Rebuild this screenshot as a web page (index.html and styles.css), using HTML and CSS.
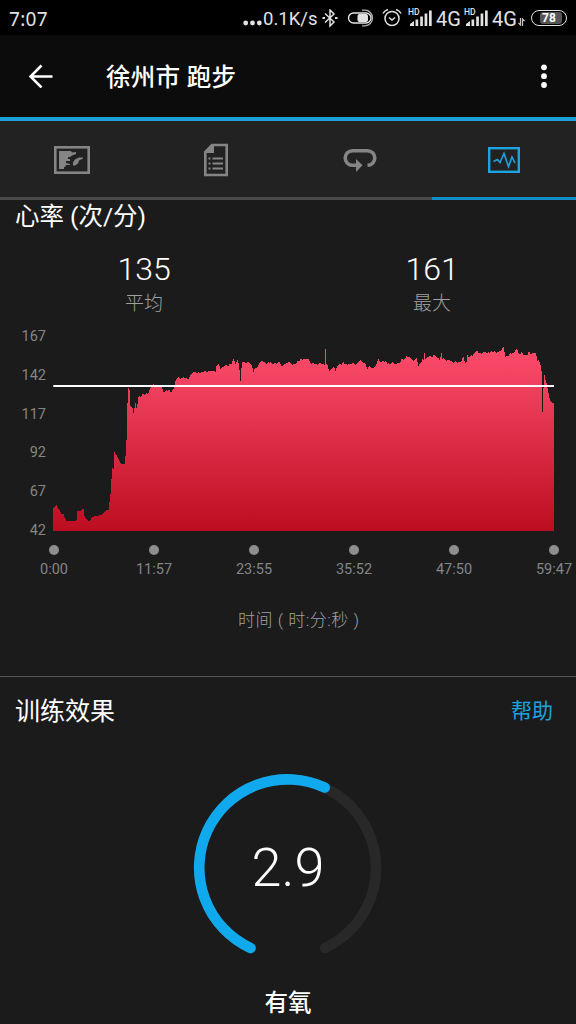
FILE: index.html
```html
<!DOCTYPE html>
<html lang="zh-CN">
<head>
<meta charset="utf-8">
<title>徐州市 跑步</title>
<link rel="stylesheet" href="styles.css">
</head>
<body>
<div class="screen">
  <div class="status">
    <span class="clock">7:07</span>
    <svg class="dots" width="19" height="18" viewBox="0 0 19 18" fill="#e2e2e2"><circle cx="2.7" cy="13" r="2.4"/><circle cx="9.5" cy="13" r="2.4"/><circle cx="16.3" cy="13" r="2.4"/></svg>
    <span class="speed">0.1K/s</span>
    <svg class="bt" width="16" height="20" viewBox="0 0 16 20" fill="none" stroke="#e2e2e2" stroke-width="1.5"><path d="M3 4.500 12 13 8 17V1l4 4-9 8.500"/><path d="M0.500 9h2.500M13 9h2.500" stroke-width="2.200"/></svg>
    <svg class="toggle" width="27" height="20" viewBox="0 0 27 20"><g transform="translate(0 -1)"><path d="M10 15H6.500a5 5 0 0 1 0-10H19a5 5 0 0 1 0 10H10" fill="none" stroke="#e2e2e2" stroke-width="1.400"/><rect x="10.500" y="6" width="10.500" height="8" rx="2" fill="#e2e2e2"/><path d="M15 2.200h3a7.500 7.800 0 0 1 0 15.600h-3" fill="none" stroke="#b5b5b5" stroke-width="1.300"/></g></svg>
    <svg class="alarm" width="20" height="20" viewBox="0 0 20 20" fill="none" stroke="#e2e2e2" stroke-width="1.500"><g transform="translate(0 -1)"><circle cx="10" cy="10.500" r="7"/><path d="M7 9.500l3 2.500 3-2.500M1 5.500Q2.500 2.500 6 1.500M19 5.500Q17.500 2.500 14 1.500"/></g></svg>
    <span class="signal"><small>HD</small><svg width="23" height="17" viewBox="0 0 23 17" fill="#e2e2e2"><path d="M1 16v-2l4-3v5zM6.500 9.500h2.700v6.500h-2.700zM11.200 6.500h2.700v9.500h-2.700zM15.600 3.500h2.700v12.500h-2.700zM20 0.500h2.700V16H20z"/></svg></span>
    <span class="net">4G</span>
    <span class="signal"><small>HD</small><svg width="23" height="17" viewBox="0 0 23 17" fill="#e2e2e2"><path d="M1 16v-2l4-3v5zM6.500 9.500h2.700v6.500h-2.700zM11.200 6.500h2.700v9.500h-2.700zM15.600 3.500h2.700v12.500h-2.700zM20 0.500h2.700V16H20z"/></svg></span>
    <span class="net">4G</span>
    <svg class="data" width="7" height="8" viewBox="0 0 7 8" fill="none" stroke="#c8c8c8" stroke-width="1.200"><path d="M2.500 0v7L0.500 5M4.500 8V1l2 2"/></svg>
    <span class="battery"><span class="level">78</span></span>
  </div>

  <header class="toolbar">
    <svg width="24" height="24" viewBox="0 0 24 24" fill="none" stroke="#fff" stroke-width="2.600"><path d="M23.500 12.500H1.500M12.500 1.500 1.500 12.500l11 11"/></svg>
    <h1>徐州市 跑步</h1>
    <svg class="more" width="6" height="24" viewBox="0 0 6 24" fill="#fff"><circle cx="3" cy="3.300" r="2.900"/><circle cx="3" cy="12.200" r="2.900"/><circle cx="3" cy="21" r="2.900"/></svg>
  </header>

  <nav class="tabs">
    <div class="tab"><svg width="36" height="28" viewBox="0 0 36 28"><rect x="1.300" y="1.300" width="33.400" height="25.400" fill="none" stroke="#858585" stroke-width="2.600"/><path fill="#858585" d="M5 5h12l1 1.500L22 6v2l-4 1.500-2 1.500h-2v2h2v2h-4v2l4 1v1h-4l-1 2h-1v2H5zM29 11.500v1l-4 2-1 3-3 2h-2v-3l2-3 4-2z"/></svg></div>
    <div class="tab"><svg width="26" height="34" viewBox="0 0 26 34"><path d="M9 2h14.700v30H2.300V9z" fill="none" stroke="#858585" stroke-width="2.600"/><path d="M1 9 9 1h2v9H1z" fill="#858585"/><path d="M5.500 15.500h2M9.500 15.500h10.500M5.500 20.500h2M9.500 20.500h10.500M5.500 25.500h2M9.500 25.500h10.500" stroke="#858585" stroke-width="2"/></svg></div>
    <div class="tab"><svg width="34" height="24" viewBox="0 0 34 24"><path d="M15 17.300H9.500a7.300 7.300 0 0 1 0-14.600h15a7.300 7.300 0 0 1 0 14.600" fill="none" stroke="#858585" stroke-width="3.600"/><path d="M13 11 19.500 17.300 13 23.900z" fill="#858585"/></svg></div>
    <div class="tab active"><svg width="32" height="26" viewBox="0 0 32 26" fill="none" stroke="#1da2df"><rect x="1.200" y="1.200" width="29.600" height="23.600" stroke-width="2.400"/><path d="M5.500 14.500l4-2 2.500 3L16 6.500l4.500 13L24 10l3 6" stroke-width="1.600"/></svg></div>
  </nav>

  <main>
    <section class="heart">
      <h2>心率 (次/分)</h2>
      <div class="stats">
        <div><strong>135</strong><span>平均</span></div>
        <div><strong>161</strong><span>最大</span></div>
      </div>
      <div class="plot">
        <div class="yaxis"><span>167</span><span>142</span><span>117</span><span>92</span><span>67</span><span>42</span></div>
        <svg width="502" height="196" viewBox="53 335 502 196">
          <defs><linearGradient id="hr" gradientUnits="userSpaceOnUse" x1="0" y1="346" x2="0" y2="531"><stop offset="0" stop-color="#ff4c6c"/><stop offset="0.200" stop-color="#f04260"/><stop offset="1" stop-color="#bd0d20"/></linearGradient></defs>
          <path fill="url(#hr)" shape-rendering="crispEdges" d="M53.300 531V508L56 505.500 57 505 58 508 60 511 62 515 63 513 65 518 66 520.500 76 521.500 77 519V511.500L80 511 82 509H84L84.500 516 86 519 90 521.500 92 517 95 516 97 515.500 98 516.500 100 514 101 516 104 512 107 510 108.500 510.500 111 490 112 468 113 467 113.700 470 114 451 117 456 120 462 121 464H125L126.500 440 127.300 408 128.200 388 129.500 390 129.700 402 131 409 132 406 133.500 413 135.500 403 136 404 137 411 138 397 140 395 141 399 142 394 145 395 146 393 148 394.500 150 389 152 385 154 384 155 386 162 387 164 393 166 390 168 391.500 169 389 171 392.500 174 388 176 379 179 376.500 180 379 182 378 184 376.500 185 379 186 377.500 188 379.500 192 373 194 371.500 197 373.500 198 371.500 200 373 202 371.500 204 372 205 370.500 207 372 209 370.500 212 371.500 214 370.500 215.500 372 216 366 218.500 363.500 219 365 220.500 368.500 222 367 224 366.500 225 364.500 228 366.500 230 363.500 231 365 232 363 233 359 234 359.500 235 363 236 364.500 237 359.500 238 361 239 364 240.500 381 242 361 243 363 244 361.500 246 363 248 362 250 364 252 366 253.500 372 255 368 257 368 260 362 262 360.500 263 362 265 361.500 266 364 268 362 270 363 271 361 272 364 275 363 276 364 279 361 280 363 282 366.500 284 364 286 363.500 289 361.500 290 363 292 365 294 363 295 365 298 360.500 299 361.500 301 358 302 360 304 358.500 305 360 306 358 307 360 308 358.500 310 361.500 311 365 313 362 314 364.500 317 364 318 365.500 319 363 322 364 323 363 324.700 365 325 349H325.800L326.200 364 328 366 329 371 332 368 334 366 335.500 371 337 366 340 363 341 364.500 342 365 343 362 344 362.500 345 366 346 362 347 365 349 363.500 351 364 354 362.500 355 366 356 364 358 362 360 360 361 361 362 360.500 363 363 366 364 367 370 369 366 371 368 372 367.500 374 368 376 365 378.500 359 379 361 381 362 383 361 384 362 386 360.500 387 364 389 363 390 365 392 362 395 364 399 363 401 361 402 357 403 361 405 358 406 357 407 355 408 358 409 356 411 359 412 358 413 361 415 359 417 357 418 366 419 366 420 363 422 361 423 358 424 361 424.500 353 425.500 359 427 357 428 358 430 355.500 432 358 434 354 435 356 436 355 437 358 439 358 440 361 441 353 442 352 442.500 359 444 358 446 361 448 360 451 361 453 363 455 361 457 363 459 361.500 461 362 463 357 464 358 465 363 467 361 467.500 355 469 358 471 355 473 356 474 353 475 354 476 351 478 351 479 355 480 352 482 355 483 352 485 352 487 354 488 352 490 353 491 351 493 352 495 350.500 496 353 498 352 500 351 501 352 502 348 504 346 505 358 507 355 508 357 510 353 512 355 513 352 514 354 515 350 517 349 519 354 521 354 522 351 523 355 528 355 529 350 530 354 534 353 536 353 537.500 361 539 360 541 366 542 375 542.500 412 543.300 395 544 371 545 378 547 385 549 396 550 400 552 403H554V531z"/>
          <path d="M53.300 386H554" stroke="#fff" stroke-width="2"/>
        </svg>
      </div>
      <div class="xaxis"><span>0:00</span><span>11:57</span><span>23:55</span><span>35:52</span><span>47:50</span><span>59:47</span></div>
      <p class="caption">时间 ( 时:分:秒 )</p>
    </section>
    <section class="effect">
      <div class="effect-head"><h2>训练效果</h2><a>帮助</a></div>
      <div class="gauge">
        <svg width="190" height="190" viewBox="193 773 190 190" fill="none" stroke-width="10.600" stroke-linecap="round"><path d="M250.500 948A88.300 88.300 0 1 1 325 948" stroke="#282828"/><path d="M250.500 948A88.300 88.300 0 0 1 324.700 787.500" stroke="#11a9ed"/></svg>
        <strong>2.9</strong>
      </div>
      <h3>有氧</h3>
    </section>
  </main>
</div>
</body>
</html>
```
FILE: styles.css
```css
* { box-sizing: border-box; margin: 0; padding: 0; }
body { background: #1b1b1b; color: #fff; font-family: Roboto, "Noto Sans CJK SC", sans-serif; }
.screen { width: 576px; height: 1024px; overflow: hidden; display: flex; flex-direction: column; }
svg { display: block; flex: none; }

.status { height: 35px; flex: none; background: #000; color: #e2e2e2; display: flex; align-items: center; padding: 2px 9px 0; font-size: 20px; line-height: 32px; white-space: nowrap; }
.clock { width: 234px; flex: none; font-family: "Noto Sans", sans-serif; font-size: 19px; letter-spacing: 0.300px; }
.speed { width: 56px; flex: none; font-size: 18.500px; padding-left: 1px; }
.bt { margin-left: 4px; }
.toggle { margin-left: 9px; }
.alarm { margin-left: 8px; }
.signal { display: flex; width: 23px; height: 17px; margin: 0 4px 0 7px; position: relative; flex: none; }
.signal small { position: absolute; left: -1px; top: -2px; font: 500 8.500px/9px Roboto, sans-serif; }
.net { width: 25px; flex: none; }
.net + .signal { margin-left: 4px; }
.data { margin: 7px 6px 0 1px; }
.battery { width: 36px; height: 16px; flex: none; border: 1.5px solid #e2e2e2; border-radius: 8px; padding: 1px 3px 1px 8px; display: flex; margin-top: -2px; }
.level { width: 22px; background: #555; border-radius: 3px; font: 700 12px/12px Roboto, sans-serif; padding-left: 2px; color: #fff; }

.toolbar { height: 82px; flex: none; background: #0c0c0c; display: flex; align-items: center; padding: 0 29px; }
.toolbar h1 { font-size: 24.500px; font-weight: 500; line-height: 36px; margin: 4px 0 0 53px; flex: 1; letter-spacing: 0.300px; }

.tabs { height: 83px; flex: none; display: flex; background: #222; border-top: 4px solid #1ba1d8; }
.tab { flex: 1; display: flex; align-items: center; justify-content: center; padding-top: 1px; border-bottom: 3px solid #4b4b4b; }
.tab.active { border-color: #128dc8; }

h2 { font-size: 24.500px; font-weight: 400; line-height: 32px; }
.heart { height: 477px; border-bottom: 1px solid #555; display: flex; flex-direction: column; }
.heart h2 { padding: 1px 0 0 15px; }
.stats { display: flex; margin-top: 16px; height: 86px; }
.stats div { flex: 1; display: flex; flex-direction: column; align-items: center; }
.stats strong { font-size: 32px; font-weight: 300; line-height: 40px; }
.stats span { font-size: 19px; font-weight: 300; line-height: 26px; margin-top: 2px; color: #a0a0a0; }
.plot { display: flex; height: 196px; }
.yaxis { width: 53px; padding-right: 7px; height: 212px; margin-top: -7px; flex: none; display: flex; flex-direction: column; justify-content: space-between; text-align: right; font-size: 14.500px; line-height: 18px; color: #858585; }
.xaxis { display: flex; justify-content: space-between; margin: 14px -28px 0 24px; width: 560px; flex: none; font-size: 14.500px; line-height: 18px; color: #858585; }
.xaxis span { width: 60px; display: flex; flex-direction: column; align-items: center; gap: 6px; }
.xaxis span::before { content: ""; width: 10px; height: 10px; border-radius: 50%; background: #8e8e8e; }
.caption { margin-top: 29px; padding-left: 238px; font-size: 17px; font-weight: 300; line-height: 24px; color: #a0a0a0; white-space: pre; letter-spacing: 0.500px; }

.effect-head { display: flex; justify-content: space-between; align-items: center; padding: 17px 23px 0 15px; }
.effect-head h2 { font-size: 25px; padding-top: 2px; }
.effect-head a { color: #1da2df; font-size: 21px; line-height: 32px; }
.gauge { display: grid; width: 190px; height: 190px; margin: 45px 0 0 193px; place-items: center; }
.gauge > * { grid-area: 1 / 1; }
.gauge strong { font-size: 54px; font-weight: 300; line-height: 60px; }
.effect h3 { margin-top: 23px; text-align: center; font-size: 23.500px; font-weight: 500; line-height: 34px; }
```
